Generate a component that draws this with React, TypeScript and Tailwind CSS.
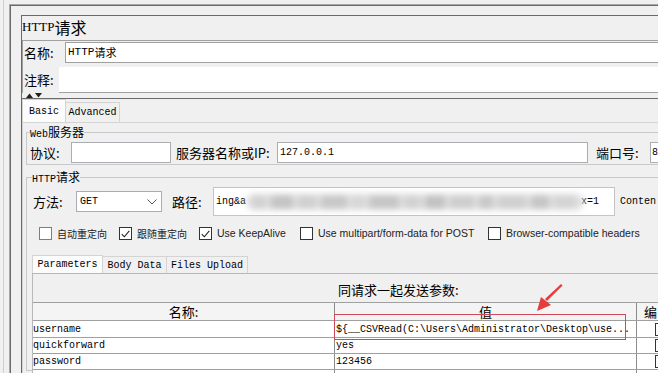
import React from "react";

const cjk = "font-['Noto_Sans_CJK_SC',sans-serif]";

function Check({ checked, focus }: { checked?: boolean; focus?: boolean }) {
  return (
    <span
      className={`flex w-[13px] h-[13px] shrink-0 items-center justify-center bg-white border ${
        focus ? "border-[#3c8ed8]" : "border-[#333333]"
      }`}
    >
      {checked && (
        <svg width="9" height="8" viewBox="0 0 9 8">
          <path d="M0.8 4.2 L3.3 6.8 L8.3 0.8" fill="none" stroke="#222" strokeWidth="1.1" />
        </svg>
      )}
    </span>
  );
}

function Blur() {
  const blocks = [
    [14, "#d2d2d2"],
    [22, "#c4c4c4"],
    [18, "#d0d0d0"],
    [26, "#c8c8c8"],
    [12, "#d6d6d6"],
    [30, "#c6c6c6"],
    [16, "#d2d2d2"],
    [20, "#c2c2c2"],
    [24, "#cecece"],
    [14, "#c8c8c8"],
    [28, "#d0d0d0"],
    [18, "#c6c6c6"],
    [22, "#d4d4d4"],
  ] as const;
  return (
    <div className="flex h-[16px] w-[338px] items-center gap-[5px] rounded-full bg-[#e0e0e0] px-[6px] blur-[3px]">
      {blocks.map(([w, c], i) => (
        <span key={i} className="h-[14px]" style={{ width: w, background: c }} />
      ))}
    </div>
  );
}

export default function App() {
  const rows = [
    { name: "username", value: "${__CSVRead(C:\\Users\\Administrator\\Desktop\\use...", h: "h-[17px]" },
    { name: "quickforward", value: "yes", h: "h-[16px]" },
    { name: "password", value: "123456", h: "h-[16px]" },
    { name: "", value: "", h: "h-[16px]" },
  ];

  return (
    <div className="relative w-[658px] h-[373px] overflow-hidden bg-[#f0f0f0] text-black font-['Liberation_Mono',monospace] text-[10px]">
      <div className="ml-[3px] h-full border-l border-[#cfcfcf] pl-[5px] pt-[4px]">
        <div className="h-full border-l border-t border-[#a8a8a8]">
          <div className="h-full border-l border-t border-[#6a6a6a] pl-[10px] pt-[9px]">
            {/* panel */}
            <div className="h-full w-[700px] border-l border-t border-[#6a6a6a]">
              {/* title */}
              <div className="flex h-[24px] items-center pb-[2px]">
                <span className="font-['Liberation_Serif',serif] text-[13px]">HTTP</span>
                <span className={`${cjk} text-[16px]`}>请求</span>
              </div>

              {/* name / comment */}
              <div className="border-l border-t border-[#a0a0a0] pt-[1px]">
                <div className="flex h-[21px] items-center">
                  <span className={`${cjk} w-[42px] pl-[1px] text-[13px]`}>名称:</span>
                  <div className="flex h-[21px] flex-1 items-center border border-[#a0a0a0] bg-white pl-[2px]">
                    <span className="text-[11px]">HTTP</span>
                    <span className={`${cjk} text-[11px]`}>请求</span>
                  </div>
                </div>
                <div className="mt-[4px] flex h-[26px] items-center">
                  <span className={`${cjk} w-[36px] pl-[1px] text-[13px]`}>注释:</span>
                  <div className="h-[26px] flex-1 border-b border-[#a0a0a0] bg-white" />
                </div>
              </div>

              {/* splitter arrows */}
              <div className="flex h-[5px] items-center gap-[2px] pl-[4px]">
                <svg width="7" height="5" viewBox="0 0 7 5">
                  <path d="M0 5 L3.5 0.5 L7 5 Z" fill="#222" />
                </svg>
                <svg width="7" height="5" viewBox="0 0 7 5">
                  <path d="M0 0 L3.5 4.5 L7 0 Z" fill="#222" />
                </svg>
              </div>

              {/* tabs */}
              <div className="border-t border-[#6a6a6a]">
                <div className="flex items-end">
                  <div className="flex h-[23px] w-[44px] items-center justify-center border-l border-r border-t border-[#d4d4d4] bg-[#fcfcfc]">
                    Basic
                  </div>
                  <div className="flex h-[20px] w-[54px] items-center justify-center border-r border-t border-[#d4d4d4] bg-[#f0f0f0]">
                    Advanced
                  </div>
                </div>

                <div className="h-[260px] border-l border-t border-[#d4d4d4] pl-[3px] pt-[3px]">
                  {/* Web server */}
                  <fieldset className="border border-[#c8c8c8] pl-[3px] pb-[1px]">
                    <legend className="h-[12px] leading-[12px]">
                      <span>Web</span>
                      <span className={`${cjk} text-[12px]`}>服务器</span>
                    </legend>
                    <div className="mt-[4px] flex h-[21px] items-center">
                      <span className={`${cjk} w-[41px] text-[13px]`}>协议:</span>
                      <div className="h-[21px] w-[100px] border border-[#abadb3] bg-white" />
                      <span className={`${cjk} ml-[5px] w-[101px] text-[13px]`}>服务器名称或IP:</span>
                      <div className="flex h-[21px] w-[311px] items-center border border-[#abadb3] bg-white pl-[2px]">
                        127.0.0.1
                      </div>
                      <span className={`${cjk} ml-[8px] w-[54px] text-[13px]`}>端口号:</span>
                      <div className="flex h-[21px] w-[60px] items-center border border-[#abadb3] bg-white pl-[1px]">
                        8
                      </div>
                    </div>
                  </fieldset>

                  {/* HTTP request */}
                  <fieldset className="mt-[6px] h-[200px] border border-[#c8c8c8] pl-[5px]">
                    <legend className="h-[12px] leading-[12px]">
                      <span>HTTP</span>
                      <span className={`${cjk} text-[12px]`}>请求</span>
                    </legend>

                    <div className="mt-[4px] flex h-[29px] items-center">
                      <span className={`${cjk} w-[44px] pl-[1px] text-[13px]`}>方法:</span>
                      <div className="flex h-[21px] w-[86px] items-center justify-between border border-[#abadb3] bg-white pl-[3px] pr-[4px]">
                        <span>GET</span>
                        <svg width="10" height="6" viewBox="0 0 10 6">
                          <path d="M0.5 0.5 L5 5 L9.5 0.5" fill="none" stroke="#555" strokeWidth="1" />
                        </svg>
                      </div>
                      <span className={`${cjk} ml-[10px] w-[41px] text-[13px]`}>路径:</span>
                      <div className="flex h-[29px] w-[402px] items-center overflow-hidden border border-[#c4c4c4] bg-white pl-[2px]">
                        <span>ing&amp;a</span>
                        <Blur />
                        <span className="-ml-[3px]">x=1</span>
                      </div>
                      <span className="ml-[5px]">Conten</span>
                    </div>

                    <div className="mt-[11px] flex h-[13px] items-center pl-[7px]">
                      <div className="flex w-[80px] items-center gap-[5px]">
                        <Check focus />
                        <span className={`${cjk} text-[10px] text-[#222]`}>自动重定向</span>
                      </div>
                      <div className="flex w-[80px] items-center gap-[5px]">
                        <Check checked />
                        <span className={`${cjk} text-[10px] text-[#222]`}>跟随重定向</span>
                      </div>
                      <div className="flex w-[101px] items-center gap-[5px]">
                        <Check checked />
                        <span className="font-['Liberation_Sans',sans-serif] text-[10.5px] text-[#222]">Use KeepAlive</span>
                      </div>
                      <div className="flex w-[188px] items-center gap-[5px]">
                        <Check />
                        <span className="font-['Liberation_Sans',sans-serif] text-[10.5px] text-[#222]">
                          Use multipart/form-data for POST
                        </span>
                      </div>
                      <div className="flex items-center gap-[5px]">
                        <Check />
                        <span className="font-['Liberation_Sans',sans-serif] text-[10.5px] text-[#222]">
                          Browser-compatible headers
                        </span>
                      </div>
                    </div>

                    {/* sub tabs */}
                    <div className="mt-[15px] flex items-end">
                      <div className="flex h-[18px] w-[71px] items-center justify-center border-l border-r border-t border-[#d4d4d4] bg-[#fcfcfc]">
                        Parameters
                      </div>
                      <div className="flex h-[17px] w-[64px] items-center justify-center border-r border-t border-[#d4d4d4]">
                        Body Data
                      </div>
                      <div className="flex h-[17px] w-[81px] items-center justify-center border-r border-t border-[#d4d4d4]">
                        Files Upload
                      </div>
                    </div>

                    <div className="h-[120px] border-l border-t border-[#b8b8b8] pt-[7px]">
                      <div className={`${cjk} h-[18px] pl-[305px] text-[13px] leading-[18px]`}>同请求一起发送参数:</div>
                      <div className="mt-[3px]">
                        <div className="flex h-[19px] border-b border-t border-[#a0a0a0] bg-[#f4f4f4]">
                          <div className={`${cjk} flex w-[302px] items-center justify-center border-r border-[#8c8c8c] text-[13px]`}>
                            名称:
                          </div>
                          <div className={`${cjk} flex w-[302px] items-center justify-center border-r border-[#8c8c8c] text-[13px]`}>
                            值
                          </div>
                          <div className={`${cjk} flex flex-1 items-center pl-[7px] text-[13px]`}>编</div>
                        </div>
                        {rows.map((r, i) => (
                          <div key={i} className={`flex ${r.h} border-b border-[#a0a0a0] bg-white`}>
                            <div className="flex w-[302px] items-center border-r border-[#8c8c8c]">{r.name}</div>
                            <div className="flex w-[302px] items-center border-r border-[#8c8c8c] pl-[1px]">{r.value}</div>
                            <div className="flex flex-1 items-center pl-[18px]">
                              {r.name && <span className="h-[13px] w-[13px] border border-[#333] bg-white" />}
                            </div>
                          </div>
                        ))}
                      </div>
                    </div>
                  </fieldset>
                </div>
              </div>
            </div>
          </div>
        </div>
      </div>

      {/* annotation */}
      <div className="absolute left-[334px] top-[314px] h-[26px] w-[292px] border border-[#d2485a]" />
      <svg className="absolute left-[530px] top-[280px]" width="40" height="36" viewBox="0 0 40 36">
        <path d="M31 4 L32.6 5.4 L17 21 L15 19 Z" fill="#e63c3c" />
        <path d="M7 31 L11 17 L21 25 Z" fill="#e63c3c" />
      </svg>
    </div>
  );
}
